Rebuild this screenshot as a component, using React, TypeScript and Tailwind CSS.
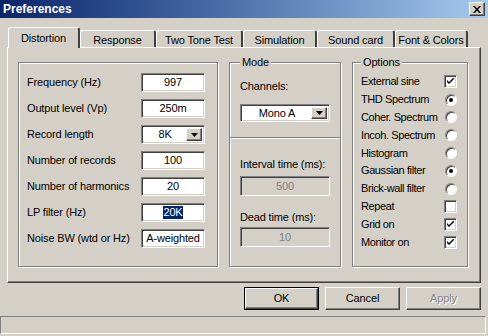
import React from 'react';

const sunken =
  'border border-t-[#808080] border-l-[#808080] border-r-white border-b-white shadow-[inset_1px_1px_0_#404040,inset_-1px_-1px_0_#d4d0c8]';
const raised =
  'border border-t-white border-l-white border-r-[#404040] border-b-[#404040] shadow-[inset_-1px_-1px_0_#808080]';
const etched = 'border border-[#808080] shadow-[inset_1px_1px_0_#fff,1px_1px_0_#fff]';

function Arrow() {
  return (
    <div className={`w-[16px] h-full bg-[#d4d0c8] flex items-center justify-center ${raised}`}>
      <svg width="7" height="4" viewBox="0 0 7 4">
        <path d="M0 0h7L3.5 4z" fill="#000" />
      </svg>
    </div>
  );
}

function Field({ children, disabled }: { children: React.ReactNode; disabled?: boolean }) {
  return (
    <div
      className={`h-full flex items-center justify-center ${sunken} ${
        disabled ? 'bg-[#d4d0c8] text-[#808080]' : 'bg-white text-black'
      }`}
    >
      {children}
    </div>
  );
}

function Select({ value }: { value: string }) {
  return (
    <div className={`h-full flex items-stretch bg-white p-[2px] ${sunken}`}>
      <div className="flex-1 flex items-center justify-center">{value}</div>
      <Arrow />
    </div>
  );
}

function Check({ on }: { on?: boolean }) {
  return (
    <div className={`w-[13px] h-[13px] bg-white flex items-center justify-center ${sunken}`}>
      {on && (
        <svg width="7" height="7" viewBox="0 0 7 7">
          <path d="M0 2l2 2 5-5v2L2 6 0 4z" fill="#000" />
        </svg>
      )}
    </div>
  );
}

function Radio({ on }: { on?: boolean }) {
  return (
    <div className="w-[12px] h-[12px] rounded-full bg-white border border-t-[#808080] border-l-[#808080] border-r-white border-b-white shadow-[inset_1px_1px_0_#404040] flex items-center justify-center">
      {on && <div className="w-[4px] h-[4px] rounded-full bg-black" />}
    </div>
  );
}

const tabs = [
  { label: 'Distortion', w: 'w-[72px]' },
  { label: 'Response', w: 'w-[76px]' },
  { label: 'Two Tone Test', w: 'w-[87px]' },
  { label: 'Simulation', w: 'w-[74px]' },
  { label: 'Sound card', w: 'w-[78px]' },
  { label: 'Font & Colors', w: 'w-[73px]' },
];

const rows: { label: string; field: React.ReactNode }[] = [
  { label: 'Frequency (Hz)', field: <Field>997</Field> },
  { label: 'Output level (Vp)', field: <Field>250m</Field> },
  { label: 'Record length', field: <Select value="8K" /> },
  { label: 'Number of records', field: <Field>100</Field> },
  { label: 'Number of harmonics', field: <Field>20</Field> },
  {
    label: 'LP filter (Hz)',
    field: (
      <Field>
        <span className="bg-[#0a246a] text-white leading-[13px]">20K</span>
      </Field>
    ),
  },
  { label: 'Noise BW (wtd or Hz)', field: <Field>A-weighted</Field> },
];

const options: { label: string; ctl: React.ReactNode }[] = [
  { label: 'External sine', ctl: <Check on /> },
  { label: 'THD Spectrum', ctl: <Radio on /> },
  { label: 'Coher. Spectrum', ctl: <Radio /> },
  { label: 'Incoh. Spectrum', ctl: <Radio /> },
  { label: 'Histogram', ctl: <Radio /> },
  { label: 'Gaussian filter', ctl: <Radio on /> },
  { label: 'Brick-wall filter', ctl: <Radio /> },
  { label: 'Repeat', ctl: <Check /> },
  { label: 'Grid on', ctl: <Check on /> },
  { label: 'Monitor on', ctl: <Check on /> },
];

export default function App() {
  return (
    <div
      className="w-[488px] h-[336px] bg-[#d4d0c8] overflow-hidden text-[11px] leading-[13px] text-black tracking-[-0.15px]"
      style={{ fontFamily: '"Liberation Sans", Arial, sans-serif' }}
    >
      {/* Title bar */}
      <div className="h-[18px] flex items-center justify-between pl-[3px] pr-[3px] bg-gradient-to-r from-[#0a246a] to-[#a6caf0]">
        <span className="text-white font-bold text-[12px] tracking-normal">Preferences</span>
        <div className={`w-[16px] h-[14px] bg-[#d4d0c8] flex items-center justify-center ${raised}`}>
          <svg width="8" height="7" viewBox="0 0 8 7">
            <path d="M0 0h2l2 2.5L6 0h2L5 3.5 8 7H6L4 4.5 2 7H0l3-3.5z" fill="#000" />
          </svg>
        </div>
      </div>

      {/* Tabs */}
      <div className="relative z-10 h-[29px] flex items-end pl-[8px]">
        {tabs.map((t, i) =>
          i === 0 ? (
            <div
              key={t.label}
              className={`${t.w} h-[21px] translate-y-[1px] bg-[#d4d0c8] border-l border-t border-white border-r-2 border-r-[#404040] rounded-t-[3px] flex justify-center pt-[4px]`}
            >
              {t.label}
            </div>
          ) : (
            <div
              key={t.label}
              className={`${t.w} h-[17px] bg-[#d4d0c8] border-l border-t border-white border-r-2 border-r-[#404040] rounded-t-[3px] flex justify-center pt-[3px]`}
            >
              {t.label}
            </div>
          )
        )}
      </div>

      {/* Panel */}
      <div className="ml-[7px] w-[474px] h-[236px] border-l border-t border-white border-r border-b border-r-[#404040] border-b-[#404040] shadow-[inset_-1px_-1px_0_#808080] flex gap-[11px] pl-[10px] pt-[14px]">
        {/* Left box */}
        <div className={`w-[200px] h-[205px] ${etched} flex flex-col gap-[7px] pt-[10px] pl-[8px] pr-[12px]`}>
          {rows.map(r => (
            <div key={r.label} className="h-[19px] flex items-center justify-between">
              <span>{r.label}</span>
              <div className="w-[64px] h-[19px]">{r.field}</div>
            </div>
          ))}
        </div>

        {/* Mode box */}
        <div className={`relative w-[112px] h-[205px] ${etched} flex flex-col`}>
          <span className="absolute -top-[7px] left-[10px] px-[2px] bg-[#d4d0c8]">Mode</span>
          <div className="px-[10px] pt-[17px]">
            <div>Channels:</div>
            <div className="mt-[11px] h-[18px]">
              <Select value="Mono A" />
            </div>
          </div>
          <div className="mt-[15px] h-[2px] border-t border-[#808080] border-b border-b-white" />
          <div className="px-[10px]">
            <div className="mt-[19px]">Interval time (ms):</div>
            <div className="mt-[5px] h-[20px]">
              <Field disabled>500</Field>
            </div>
            <div className="mt-[15px]">Dead time (ms):</div>
            <div className="mt-[3px] h-[20px]">
              <Field disabled>10</Field>
            </div>
          </div>
        </div>

        {/* Options box */}
        <div className={`relative w-[116px] h-[205px] ${etched} flex flex-col pt-[10px] pl-[8px] pr-[10px]`}>
          <span className="absolute -top-[7px] left-[8px] px-[2px] bg-[#d4d0c8]">Options</span>
          {options.map(o => (
            <div key={o.label} className="h-[17.8px] flex items-center justify-between">
              <span className="tracking-[-0.4px] whitespace-nowrap">{o.label}</span>
              <div className="w-[13px] shrink-0 flex justify-center">{o.ctl}</div>
            </div>
          ))}
        </div>
      </div>

      {/* Buttons */}
      <div className="mt-[4px] flex justify-end gap-[6px] pr-[7px]">
        <div className="w-[75px] h-[23px] border border-black">
          <div className={`h-full bg-[#d4d0c8] flex items-center justify-center ${raised}`}>OK</div>
        </div>
        <div className={`w-[75px] h-[23px] bg-[#d4d0c8] flex items-center justify-center ${raised}`}>Cancel</div>
        <div
          className={`w-[75px] h-[23px] bg-[#d4d0c8] flex items-center justify-center text-[#808080] [text-shadow:1px_1px_0_#fff] ${raised}`}
        >
          Apply
        </div>
      </div>

      {/* Status bar */}
      <div className="mt-[6px] w-[486px] h-[18px] border border-t-[#808080] border-l-[#808080] border-r-white border-b-white" />
    </div>
  );
}
